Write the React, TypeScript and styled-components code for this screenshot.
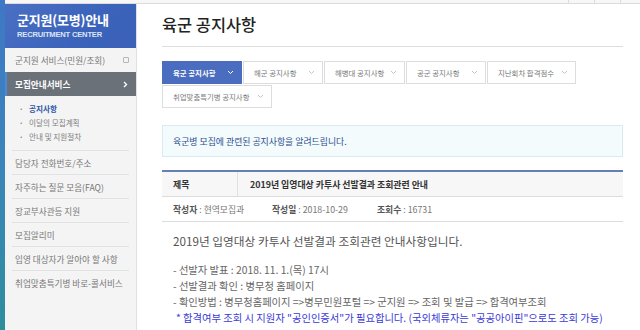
import styled, { createGlobalStyle } from 'styled-components';

const GlobalStyle = createGlobalStyle`
  html, body {
    margin: 0;
    padding: 0;
    background: #ffffff;
  }
  body {
    font-family: "Noto Sans CJK KR", "Noto Sans", sans-serif;
    color: #555;
  }
  * {
    box-sizing: border-box;
  }
`;

const Page = styled.div`
  display: flex;
  width: 640px;
  height: 330px;
  overflow: hidden;
`;

const Edge = styled.div`
  width: 5px;
  flex-shrink: 0;
  background: linear-gradient(180deg, #3f78c6 0%, #3a86b8 55%, #2d8e9c 100%);
`;

const Frame = styled.div`
  flex: 1;
  display: flex;
  flex-direction: column;
`;

const TopBar = styled.div`
  height: 4px;
  display: flex;
  justify-content: flex-end;
  border-bottom: 1px solid #dcdcdc;
  background: #f7f7f7;
`;

const TopItem = styled.span<{ $w: number }>`
  width: ${(p) => p.$w}px;
  border-left: 1px solid #dcdcdc;
`;

const Body = styled.div`
  flex: 1;
  display: flex;
`;

const Sidebar = styled.nav`
  width: 132px;
  flex-shrink: 0;
  background: #f4f4f4;
  border-right: 1px solid #e0e0e0;
`;

const SideHeader = styled.div`
  height: 44px;
  padding: 8px 12px 0;
  background: linear-gradient(135deg, #4a70c4 0%, #3b63bb 60%, #3a61b6 100%);
  color: #fff;
`;

const SideTitle = styled.div`
  font-size: 13px;
  line-height: 16px;
  font-weight: 700;
  letter-spacing: -0.2px;
`;

const SideSub = styled.div`
  margin-top: 3px;
  font-family: "Liberation Sans", Arial, sans-serif;
  font-size: 7.6px;
  line-height: 8px;
  font-weight: 700;
  letter-spacing: -0.2px;
  color: #dbe4f7;
`;

const MenuList = styled.ul`
  list-style: none;
  margin: 0;
  padding: 0;
`;

const MenuItem = styled.li<{ $divided?: boolean }>`
  height: 24px;
  margin: 0 7px;
  padding-left: 3px;
  display: flex;
  align-items: center;
  justify-content: space-between;
  font-size: 8.6px;
  color: #777;
  border-top: ${(p) => (p.$divided ? '1px solid #e2e2e2' : 'none')};
`;

const ActiveItem = styled.li`
  height: 24px;
  padding: 0 8px 0 8px;
  display: flex;
  align-items: center;
  justify-content: space-between;
  background: #6b7179;
  border-left: 2px solid #4b8ad6;
  color: #fff;
  font-size: 8.6px;
  font-weight: 700;
`;

const SquareIcon = styled.span`
  width: 6px;
  height: 6px;
  border: 1px solid #b5b5b5;
  border-radius: 1px;
`;

const SubList = styled.ul`
  list-style: none;
  margin: 0;
  padding: 6px 0 6px 14px;
`;

const SubItem = styled.li<{ $current?: boolean }>`
  height: 14px;
  line-height: 14px;
  font-size: 7.6px;
  color: ${(p) => (p.$current ? '#2f55a8' : '#808080')};
  font-weight: ${(p) => (p.$current ? 700 : 400)};

  &::before {
    content: '·';
    display: inline-block;
    width: 10px;
    color: #888;
    font-weight: 700;
  }
`;

const Main = styled.main`
  flex: 1;
  padding: 0 17px 0 25px;
`;

const PageTitle = styled.h1`
  margin: 0;
  padding: 10px 0 12px;
  font-size: 16.4px;
  line-height: 20px;
  font-weight: 500;
  color: #222;
  border-bottom: 1px solid #dedede;
`;

const Tabs = styled.div`
  margin-top: 14px;
  display: flex;
  flex-wrap: wrap;
  gap: 1px 1px;
  width: 430px;
`;

const Tab = styled.div<{ $active?: boolean; $w: number }>`
  width: ${(p) => p.$w}px;
  height: 23px;
  padding: 0 7px 0 10px;
  display: flex;
  align-items: center;
  justify-content: space-between;
  font-size: 7.4px;
  font-weight: ${(p) => (p.$active ? 700 : 400)};
  color: ${(p) => (p.$active ? '#fff' : '#7a7a7a')};
  background: ${(p) => (p.$active ? '#4a6dbf' : '#fff')};
  border: 1px solid ${(p) => (p.$active ? '#4a6dbf' : '#dddddd')};
`;

const InfoBox = styled.div`
  margin-top: 17px;
  height: 32px;
  padding-left: 10px;
  display: flex;
  align-items: center;
  background: #f3fbfd;
  border: 1px solid #d7ecf1;
  font-size: 8.9px;
  color: #2f4e8e;
`;

const Table = styled.div`
  margin-top: 13px;
  border-top: 2px solid #6580b4;
`;

const TitleRow = styled.div`
  display: flex;
  height: 25px;
  background: #f7f7f7;
  border-bottom: 1px solid #dcdcdc;
  font-size: 8.9px;
  font-weight: 700;
  color: #333;
`;

const LabelCell = styled.div`
  width: 76px;
  padding-left: 11px;
  display: flex;
  align-items: center;
  border-right: 1px solid #e0e0e0;
`;

const ValueCell = styled.div`
  flex: 1;
  padding-left: 12px;
  display: flex;
  align-items: center;
`;

const MetaRow = styled.div`
  display: flex;
  align-items: center;
  height: 25px;
  padding-left: 11px;
  border-bottom: 1px solid #dcdcdc;
  font-size: 8.8px;
  color: #777;
`;

const Meta = styled.span<{ $w: number }>`
  width: ${(p) => p.$w}px;

  b {
    font-weight: 600;
    color: #555;
  }
`;

const Article = styled.div`
  padding: 11px 0 0 11px;
`;

const Lead = styled.p`
  margin: 0;
  font-size: 11.7px;
  line-height: 16px;
  color: #555;
`;

const Lines = styled.div`
  margin-top: 13px;
`;

const Line = styled.p<{ $note?: boolean }>`
  margin: 0;
  padding-left: ${(p) => (p.$note ? '3px' : '0')};
  font-size: 10.3px;
  line-height: 16px;
  white-space: nowrap;
  color: ${(p) => (p.$note ? '#3b3ad6' : '#666')};
`;

const Chevron = ({ color }: { color: string }) => (
  <svg width="7" height="5" viewBox="0 0 7 5" fill="none">
    <path d="M1 1l2.5 2.5L6 1" stroke={color} strokeWidth="1" />
  </svg>
);

const ChevronRight = () => (
  <svg width="5" height="7" viewBox="0 0 5 7" fill="none">
    <path d="M1 1l2.5 2.5L1 6" stroke="#fff" strokeWidth="1.4" />
  </svg>
);

const menuItems = [
  '담당자 전화번호/주소',
  '자주하는 질문 모음(FAQ)',
  '장교부사관등 지원',
  '모집알리미',
  '입영 대상자가 알아야 할 사항',
  '취업맞춤특기병 바로-콜서비스',
];

const tabs = [
  { label: '육군 공지사항', w: 80, active: true },
  { label: '해군 공지사항', w: 80 },
  { label: '해병대 공지사항', w: 81 },
  { label: '공군 공지사항', w: 80 },
  { label: '지난회차 합격점수', w: 89 },
  { label: '취업맞춤특기병 공지사항', w: 110 },
];

const App = () => {
  return (
    <>
      <GlobalStyle />
      <Page>
        <Edge />
        <Frame>
          <TopBar>
            <TopItem $w={26} />
            <TopItem $w={26} />
            <TopItem $w={20} />
          </TopBar>
          <Body>
            <Sidebar>
              <SideHeader>
                <SideTitle>군지원(모병)안내</SideTitle>
                <SideSub>RECRUITMENT CENTER</SideSub>
              </SideHeader>
              <MenuList>
                <MenuItem>
                  군지원 서비스(민원/조회)
                  <SquareIcon />
                </MenuItem>
                <ActiveItem>
                  모집안내서비스
                  <ChevronRight />
                </ActiveItem>
                <li>
                  <SubList>
                    <SubItem $current>공지사항</SubItem>
                    <SubItem>이달의 모집계획</SubItem>
                    <SubItem>안내 및 지원절차</SubItem>
                  </SubList>
                </li>
                {menuItems.map((item) => (
                  <MenuItem key={item} $divided>
                    {item}
                  </MenuItem>
                ))}
              </MenuList>
            </Sidebar>
            <Main>
              <PageTitle>육군 공지사항</PageTitle>
              <Tabs>
                {tabs.map((tab) => (
                  <Tab key={tab.label} $w={tab.w} $active={tab.active}>
                    {tab.label}
                    <Chevron color={tab.active ? '#fff' : '#c4c4c4'} />
                  </Tab>
                ))}
              </Tabs>
              <InfoBox>육군병 모집에 관련된 공지사항을 알려드립니다.</InfoBox>
              <Table>
                <TitleRow>
                  <LabelCell>제목</LabelCell>
                  <ValueCell>2019년 입영대상 카투사 선발결과 조회관련 안내</ValueCell>
                </TitleRow>
                <MetaRow>
                  <Meta $w={99}>
                    <b>작성자</b> : 현역모집과
                  </Meta>
                  <Meta $w={105}>
                    <b>작성일</b> : 2018-10-29
                  </Meta>
                  <Meta $w={100}>
                    <b>조회수</b> : 16731
                  </Meta>
                </MetaRow>
              </Table>
              <Article>
                <Lead>2019년 입영대상 카투사 선발결과 조회관련 안내사항입니다.</Lead>
                <Lines>
                  <Line>- 선발자 발표 : 2018. 11. 1.(목) 17시</Line>
                  <Line>- 선발결과 확인 : 병무청 홈페이지</Line>
                  <Line>
                    - 확인방법 : 병무청홈페이지 =&gt;병무민원포털 =&gt; 군지원 =&gt; 조회 및 발급 =&gt; 합격여부조회
                  </Line>
                  <Line $note>
                    * 합격여부 조회 시 지원자 "공인인증서"가 필요합니다. (국외체류자는 "공공아이핀"으로도 조회 가능)
                  </Line>
                </Lines>
              </Article>
            </Main>
          </Body>
        </Frame>
      </Page>
    </>
  );
};

export default App;
